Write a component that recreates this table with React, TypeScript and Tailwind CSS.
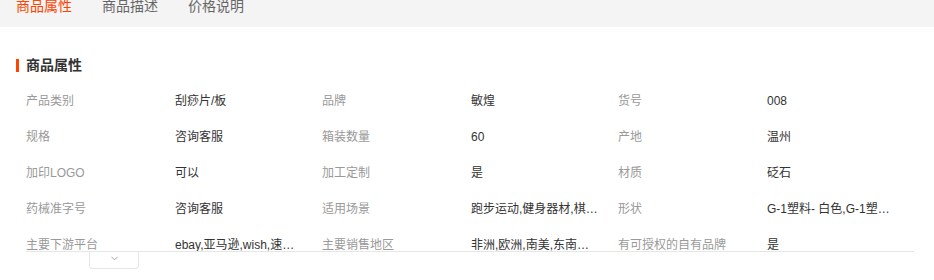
import { ChevronDown } from "lucide-react";

const tabs = ["商品属性", "商品描述", "价格说明"];

const attrs: [string, string][] = [
  ["产品类别", "刮痧片/板"],
  ["品牌", "敏煌"],
  ["货号", "008"],
  ["规格", "咨询客服"],
  ["箱装数量", "60"],
  ["产地", "温州"],
  ["加印LOGO", "可以"],
  ["加工定制", "是"],
  ["材质", "砭石"],
  ["药械准字号", "咨询客服"],
  ["适用场景", "跑步运动,健身器材,棋牌娱乐,户外"],
  ["形状", "G-1塑料- 白色,G-1塑料- 黑色"],
  ["主要下游平台", "ebay,亚马逊,wish,速卖通,独立站"],
  ["主要销售地区", "非洲,欧洲,南美,东南亚,北美"],
  ["有可授权的自有品牌", "是"],
];

export default function App() {
  return (
    <div
      className="w-[934px] h-[280px] bg-white overflow-hidden"
      style={{ fontFamily: '"Liberation Sans", "Noto Sans CJK SC", sans-serif' }}
    >
      {/* tab strip */}
      <div className="h-[28px] bg-[#f4f4f4] flex items-start pl-4 gap-[30px] text-[14px] leading-[14px] -mt-[1px]">
        {tabs.map((t, i) => (
          <span key={t} className={i === 0 ? "text-[#ff4400]" : "text-[#666]"}>
            {t}
          </span>
        ))}
      </div>

      <div className="pt-[31px] pl-4 pr-5">
        {/* section title */}
        <div className="flex items-center h-[14px]">
          <span className="w-[3px] h-[13px] bg-[#ff4400]" />
          <span className="ml-[7px] text-[14px] font-bold text-[#333] leading-[14px]">商品属性</span>
        </div>

        {/* attribute grid, collapsed */}
        <div className="ml-[10px] mt-[11px] h-[169px] overflow-hidden border-b border-[#e6e6e6]">
          <div className="grid grid-cols-3">
            {attrs.map(([k, v]) => (
              <div key={k} className="flex h-[36px] items-center text-[12px]">
                <span className="w-[149px] shrink-0 text-[#999]">{k}</span>
                <span className="w-[128px] truncate text-[#333]">{v}</span>
              </div>
            ))}
          </div>
        </div>

        <div className="ml-[73px] w-[50px] h-[17px] border border-t-0 border-[#e6e6e6] rounded-b-[4px] flex justify-center pt-[1px] bg-white">
          <ChevronDown className="w-[11px] h-[11px] text-[#999]" strokeWidth={2} />
        </div>
      </div>
    </div>
  );
}
